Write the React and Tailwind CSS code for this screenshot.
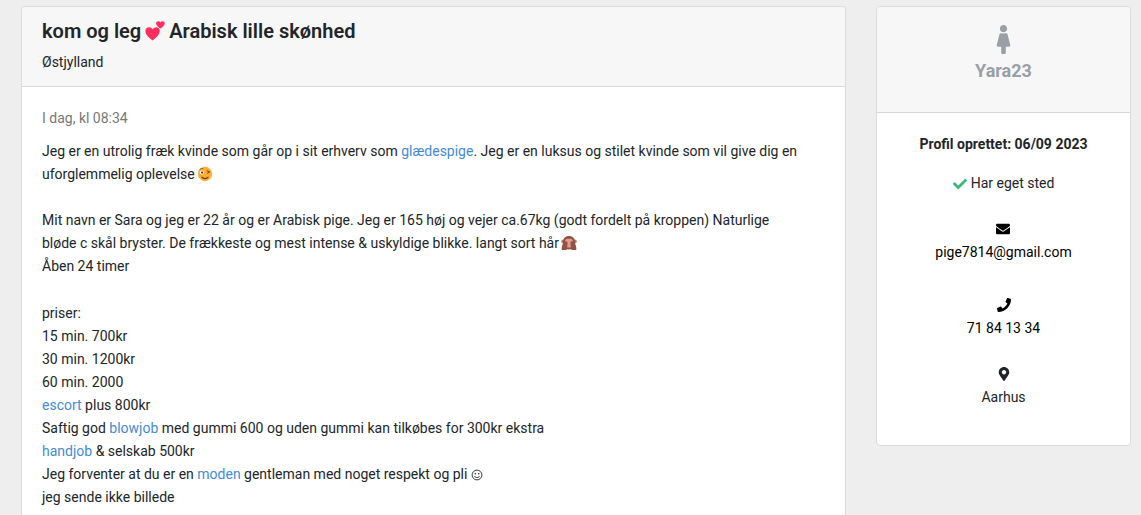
import {
  FaCheck,
  FaEnvelope,
  FaFemale,
  FaMapMarkerAlt,
  FaPhone,
} from "react-icons/fa";

function HeartsEmoji() {
  return (
    <svg
      viewBox="0 0 20 20"
      className="inline-block size-5 mx-1 align-[-3px]"
      role="img"
      aria-label="hjerter"
    >
      <g fill="#ff2e5f">
        <path d="M7.6 19.4C4.5 17.2.4 13.6.4 10.200 .4 7.900 2 6.300 4 6.300c1.600 0 2.900.8 3.700 2.300.7-1.500 2-2.300 3.500-2.300 2.100 0 3.600 1.600 3.600 3.800 0 3.500-4.100 7.100-7.200 9.300z" />
        <path d="M15.400 7.600c-2-1.400-4.300-3.200-4.300-5.100 0-1.300.9-2.200 2.100-2.200 1 0 1.700.5 2.200 1.300.5-.8 1.200-1.300 2.200-1.300 1.200 0 2.100.9 2.100 2.200 0 1.900-2.300 3.700-4.300 5.100z" />
      </g>
    </svg>
  );
}

function WinkEmoji() {
  return (
    <svg
      viewBox="0 0 16 16"
      className="inline-block size-4 ml-0.5 align-[-3px]"
      role="img"
      aria-label="blinker"
    >
      <circle cx="8" cy="8" r="7.2" fill="#fdae33" />
      <circle cx="4.800" cy="6.400" r="2" fill="#fff" />
      <circle cx="5.100" cy="6.600" r="1.100" fill="#4a2b20" />
      <g fill="none" stroke="#6b3a1e" strokeLinecap="round">
        <path d="M2.800 3.500c.8-.9 2-1.200 3-.9" strokeWidth="0.8" />
        <path d="M10 4.800l2.800 1.200-2.300 1.200" strokeWidth="0.9" />
        <path d="M5 11.200c1.700 1.600 4.300 1.600 6 0" strokeWidth="1.200" />
      </g>
    </svg>
  );
}

function MonkeyEmoji() {
  return (
    <svg
      viewBox="0 0 16 16"
      className="inline-block size-4 ml-0.5 align-[-3px]"
      role="img"
      aria-label="abe"
    >
      <circle cx="2.200" cy="6.500" r="1.900" fill="#b97a68" />
      <circle cx="13.800" cy="6.500" r="1.900" fill="#b97a68" />
      <path
        d="M8 1C4.300 1 2 3.500 2 7c0 4.500 2.500 7.500 6 7.500s6-3 6-7.500c0-3.500-2.300-6-6-6z"
        fill="#8d5444"
      />
      <path
        d="M8 4c-2-1-4 .2-4 2.500C4 11 5 12.500 8 12.500s4-1.500 4-6C12 4.200 10 3 8 4z"
        fill="#e8998c"
      />
      <path
        d="M3 7c1.300-1 3-.8 3.400.1.300 1.200.2 2 0 3.200L5.700 15H.7c-.2-3 .5-6 2.300-8zM13 7c-1.300-1-3-.8-3.400.1-.3 1.200-.2 2 0 3.200l.7 4.700h5c.2-3-.5-6-2.300-8z"
        fill="#8f5645"
      />
    </svg>
  );
}

function SmileyIcon() {
  return (
    <svg
      viewBox="0 0 12 12"
      className="inline-block size-3 align-[-2px]"
      role="img"
      aria-label="smiley"
    >
      <circle cx="6" cy="6" r="4.900" fill="none" stroke="#212529" strokeWidth="0.9" />
      <circle cx="4.300" cy="4.700" r="0.8" fill="#212529" />
      <circle cx="7.700" cy="4.700" r="0.8" fill="#212529" />
      <path
        d="M3.400 7c.9 2 4.300 2 5.200 0"
        fill="none"
        stroke="#212529"
        strokeWidth="0.9"
      />
    </svg>
  );
}

function TagLink({ children }) {
  return (
    <a href="#" className="text-[#448bd6] hover:underline">
      {children}
    </a>
  );
}

function Listing() {
  return (
    <article className="min-w-0 flex-1 rounded-t border border-b-0 border-[#dcdcdc] bg-white">
      <header className="rounded-t border-b border-[#d8d8d8] bg-[#f7f7f7] px-5 pt-3 pb-3">
        <h1 className="text-xl leading-6 font-semibold">
          kom og leg
          <HeartsEmoji />
          Arabisk lille skønhed
        </h1>
        <p className="mt-2 leading-[23px]">Østjylland</p>
      </header>

      <div className="px-5 pt-5 pb-5">
        <time className="block text-[#777777]">I dag, kl 08:34</time>
        <div className="mt-[10px]">
          <p>
            Jeg er en utrolig fræk kvinde som går op i sit erhverv som{" "}
            <TagLink>glædespige</TagLink>. Jeg er en luksus og stilet kvinde som
            vil give dig en
            <br />
            uforglemmelig oplevelse
            <WinkEmoji />
          </p>
          <p className="mt-[23px]">
            Mit navn er Sara og jeg er 22 år og er Arabisk pige. Jeg er 165 høj
            og vejer ca.67kg (godt fordelt på kroppen) Naturlige
            <br />
            bløde c skål bryster. De frækkeste og mest intense &amp; uskyldige
            blikke. langt sort hår
            <MonkeyEmoji />
            <br />
            Åben 24 timer
          </p>
          <p className="mt-6">
            priser:
            <br />
            15 min. 700kr
            <br />
            30 min. 1200kr
            <br />
            60 min. 2000
            <br />
            <TagLink>escort</TagLink> plus 800kr
            <br />
            Saftig god <TagLink>blowjob</TagLink> med gummi 600 og uden gummi kan
            tilkøbes for 300kr ekstra
            <br />
            <TagLink>handjob</TagLink> &amp; selskab 500kr
            <br />
            Jeg forventer at du er en <TagLink>moden</TagLink> gentleman med
            noget respekt og pli <SmileyIcon />
            <br />
            jeg sende ikke billede
          </p>
        </div>
      </div>
    </article>
  );
}

function ProfileCard() {
  return (
    <aside className="w-[255px] shrink-0 self-start rounded border border-[#dcdcdc] bg-white text-center">
      <header className="flex flex-col items-center rounded-t border-b border-[#d8d8d8] bg-[#f7f7f7] pt-[18px] pb-[29px] text-[#9a9fa5]">
        <FaFemale size={29} />
        <h2 className="mt-[5px] text-lg leading-6 font-bold">Yara23</h2>
      </header>

      <div className="flex flex-col items-center px-5 pt-5 pb-9">
        <p className="font-bold">Profil oprettet: 06/09 2023</p>
        <p className="mt-4 flex items-center gap-1">
          <FaCheck size={14} className="text-[#3cb878]" />
          Har eget sted
        </p>
        <a
          href="mailto:pige7814@gmail.com"
          className="mt-[27px] flex flex-col items-center gap-[5px] text-black"
        >
          <FaEnvelope size={14} />
          pige7814@gmail.com
        </a>
        <a
          href="tel:71841334"
          className="mt-[34px] flex flex-col items-center gap-[5px] text-black"
        >
          <FaPhone size={14} />
          71 84 13 34
        </a>
        <p className="mt-[27px] flex flex-col items-center gap-[5px]">
          <FaMapMarkerAlt size={14} />
          Aarhus
        </p>
      </div>
    </aside>
  );
}

function App() {
  return (
    <main className="flex min-h-screen gap-[30px] bg-[#eeeeee] pt-[6px] pr-[10px] pl-[21px] font-['Roboto',sans-serif] text-sm leading-[23px] text-[#212529]">
      <Listing />
      <ProfileCard />
    </main>
  );
}

export default App;
